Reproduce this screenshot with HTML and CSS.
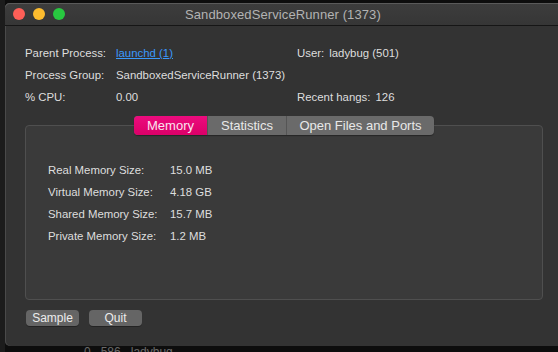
FILE: index.html
```html
<!DOCTYPE html>
<html>
<head>
<meta charset="utf-8">
<link rel="stylesheet" href="styles.css">
</head>
<body>
<div class="screen">
  <div class="window">
    <div class="titlebar">
      <div class="lights">
        <span class="light red"></span>
        <span class="light yellow"></span>
        <span class="light green"></span>
      </div>
      <div class="title">SandboxedServiceRunner (1373)</div>
    </div>
    <div class="content">
      <div class="info">
        <div class="row">
          <span class="lbl">Parent Process:</span><a class="link">launchd (1)</a>
          <span class="rlbl">User:</span><span class="rval">ladybug (501)</span>
        </div>
        <div class="row">
          <span class="lbl">Process Group:</span><span>SandboxedServiceRunner (1373)</span>
        </div>
        <div class="row">
          <span class="lbl">% CPU:</span><span>0.00</span>
          <span class="rlbl">Recent hangs:</span><span class="rval">126</span>
        </div>
      </div>
      <div class="tabbox">
        <div class="tabs">
          <span class="tab active">Memory</span><span class="tab">Statistics</span><span class="tab">Open Files and Ports</span>
        </div>
        <div class="panel">
          <div class="mrow"><span class="mlbl">Real Memory Size:</span><span>15.0 MB</span></div>
          <div class="mrow"><span class="mlbl">Virtual Memory Size:</span><span>4.18 GB</span></div>
          <div class="mrow"><span class="mlbl">Shared Memory Size:</span><span>15.7 MB</span></div>
          <div class="mrow"><span class="mlbl">Private Memory Size:</span><span>1.2 MB</span></div>
        </div>
      </div>
      <div class="buttons">
        <button class="btn">Sample</button>
        <button class="btn">Quit</button>
      </div>
    </div>
  </div>
  <div class="behind"><span class="c1">0</span><span class="c2">586</span><span>ladybug</span></div>
</div>
</body>
</html>
```
FILE: styles.css
```css
html, body {
  margin: 0;
  padding: 0;
  background: #0d0d0d;
}
.screen {
  width: 558px;
  height: 352px;
  overflow: hidden;
  background: linear-gradient(to right, #1c1c1c 0 5px, #0d0d0d 5px);
  font-family: "Liberation Sans", Arial, sans-serif;
  color: #dedede;
  font-size: 11.4px;
}
.window {
  margin: 3px 0 0 5px;
  width: 570px;
  height: 343px;
  background: #333333;
  border-radius: 5px 0 0 5px;
  box-shadow: inset 1px 0 0 #4a4a4a, inset 0 1px 0 #555;
  display: flex;
  flex-direction: column;
}
.titlebar {
  height: 22px;
  border-bottom: 1px solid #161616;
  background: linear-gradient(#3d3d3d, #363636);
  border-radius: 5px 0 0 0;
  display: flex;
  align-items: center;
  position: relative;
  box-shadow: inset 0 1px 0 #5a5a5a;
}
.lights {
  display: flex;
  gap: 8px;
  padding-left: 8px;
}
.light {
  width: 12px;
  height: 12px;
  border-radius: 50%;
}
.red { background: #fe5f57; }
.yellow { background: #fdbc2e; }
.green { background: #28c840; }
.title {
  position: absolute;
  left: 180px;
  top: 4px;
  font-size: 13px;
  color: #b3b3b3;
  letter-spacing: 0.1px;
}
.content {
  padding: 16px 0 0 20px;
}
.info {
  display: flex;
  flex-direction: column;
}
.row {
  height: 22px;
  display: flex;
  align-items: center;
}
.lbl {
  width: 91px;
}
.link {
  color: #3b99fc;
  text-decoration: underline;
  width: 181px;
}
.row > span:nth-child(2):not(.rval) {
  width: 181px;
}
.rlbl {
  margin-right: 5px;
}
.tabbox {
  margin-top: 8px;
  width: 518px;
  position: relative;
  padding-top: 9px;
}
.tabs {
  position: absolute;
  top: 0;
  left: 109px;
  display: flex;
  height: 19px;
  border-radius: 4px;
  overflow: hidden;
  background: #6a6a6a;
  box-shadow: 0 1px 1px rgba(0,0,0,0.35);
}
.tab {
  display: flex;
  align-items: center;
  justify-content: center;
  font-size: 13px;
  color: #e8e8e8;
  height: 19px;
  border-left: 1px solid #555;
}
.tab:nth-child(1) { width: 73px; border-left: none; }
.tab:nth-child(2) { width: 78px; }
.tab:nth-child(3) { width: 147px; }
.tab.active {
  background: linear-gradient(#ec0c7e, #db0068);
  color: #fbe3ef;
}
.panel {
  border: 1px solid #4f4f4f;
  border-radius: 4px;
  background: #3a3a3a;
  padding: 33px 0 0 22px;
  box-sizing: border-box;
  height: 175px;
}
.mrow {
  height: 22px;
  display: flex;
  align-items: center;
}
.mlbl {
  width: 122px;
}
.buttons {
  margin-top: 10px;
  display: flex;
  gap: 10px;
  padding-left: 1px;
}
.btn {
  width: 53px;
  height: 16px;
  border: none;
  border-radius: 4px;
  background: #656565;
  color: #ececec;
  font-family: "Liberation Sans", Arial, sans-serif;
  font-size: 12px;
  padding: 0;
  line-height: 16px;
  box-shadow: 0 1px 0 rgba(0,0,0,0.3);
}
.behind {
  padding-left: 84px;
  color: #6a6a6a;
  font-size: 12px;
  line-height: 12px;
  height: 6px;
}
.behind span { margin-right: 10px; }
```
